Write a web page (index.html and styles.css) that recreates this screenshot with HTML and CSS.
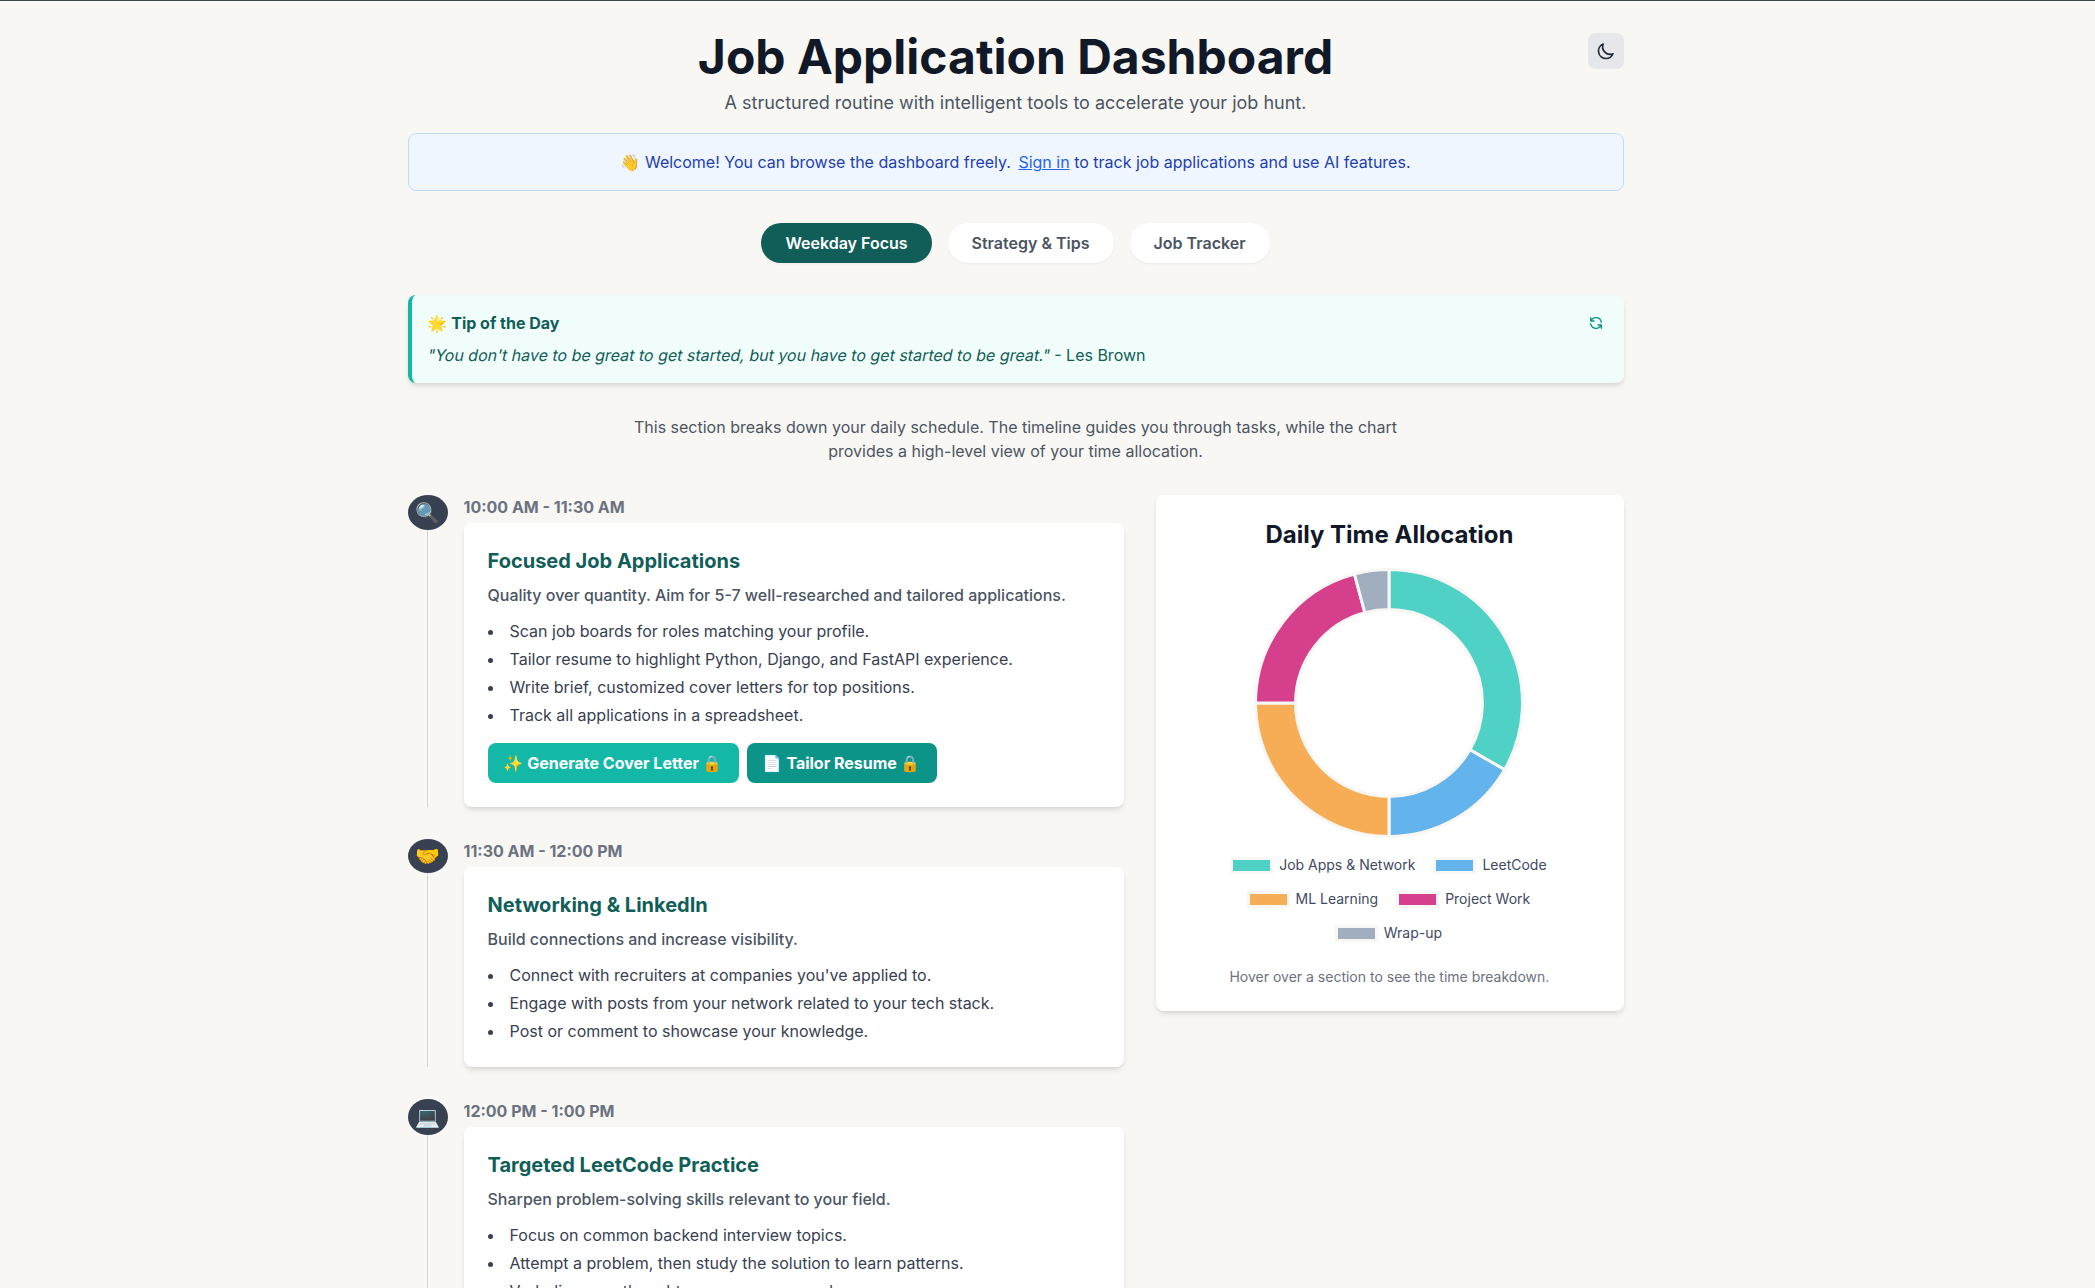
FILE: index.html
```html
<!doctype html>
<html lang="en">
<head>
    <meta charset="utf-8"/>
    <title>Job Application Dashboard</title>
    <link rel="stylesheet" href="styles.css">
</head>
<body>
    <div class="top-line"></div>
    <div class="page">
        <header class="header">
            <h1>Job Application Dashboard</h1>
            <button class="theme-btn" aria-label="Toggle theme">
                <svg viewBox="0 0 24 24" width="20" height="20" fill="none" stroke="#1f2937" stroke-width="2" stroke-linecap="round" stroke-linejoin="round"><path d="M20.354 15.354A9 9 0 018.646 3.646 9.003 9.003 0 0012 21a9.003 9.003 0 008.354-5.646z"/></svg>
            </button>
            <p class="subtitle">A structured routine with intelligent tools to accelerate your job hunt.</p>
        </header>

        <div class="banner">👋 Welcome! You can browse the dashboard freely. <a href="#">Sign in</a> to track job applications and use AI features.</div>

        <nav class="tabs">
            <a class="tab active" href="#">Weekday Focus</a>
            <a class="tab" href="#">Strategy &amp; Tips</a>
            <a class="tab" href="#">Job Tracker</a>
        </nav>

        <section class="tip">
            <div class="tip-head">
                <h3>🌟 Tip of the Day</h3>
                <button class="tip-refresh" aria-label="New tip">
                    <svg viewBox="0 0 24 24" width="16" height="16" fill="none" stroke="#0d9488" stroke-width="2" stroke-linecap="round" stroke-linejoin="round"><path d="M4 4v5h.582m15.356 2A8.001 8.001 0 004.582 9m0 0H9m11 11v-5h-.581m0 0a8.003 8.003 0 01-15.357-2m15.357 2H15"/></svg>
                </button>
            </div>
            <p class="tip-text"><span class="quote">"You don't have to be great to get started, but you have to get started to be great."</span> - Les Brown</p>
        </section>

        <p class="intro">This section breaks down your daily schedule. The timeline guides you through tasks, while the chart provides a high-level view of your time allocation.</p>

        <div class="grid">
            <div class="timeline">
                <div class="item">
                    <div class="marker">
                        <div class="circle">🔍</div>
                        <div class="line"></div>
                    </div>
                    <div class="body">
                        <p class="time">10:00 AM - 11:30 AM</p>
                        <div class="card">
                            <h4>Focused Job Applications</h4>
                            <p class="desc">Quality over quantity. Aim for 5-7 well-researched and tailored applications.</p>
                            <ul>
                                <li>Scan job boards for roles matching your profile.</li>
                                <li>Tailor resume to highlight Python, Django, and FastAPI experience.</li>
                                <li>Write brief, customized cover letters for top positions.</li>
                                <li>Track all applications in a spreadsheet.</li>
                            </ul>
                            <div class="actions">
                                <button class="btn btn-light">✨ Generate Cover Letter 🔒</button>
                                <button class="btn btn-dark">📄 Tailor Resume 🔒</button>
                            </div>
                        </div>
                    </div>
                </div>

                <div class="item">
                    <div class="marker">
                        <div class="circle short">🤝</div>
                        <div class="line"></div>
                    </div>
                    <div class="body">
                        <p class="time">11:30 AM - 12:00 PM</p>
                        <div class="card">
                            <h4>Networking &amp; LinkedIn</h4>
                            <p class="desc">Build connections and increase visibility.</p>
                            <ul>
                                <li>Connect with recruiters at companies you've applied to.</li>
                                <li>Engage with posts from your network related to your tech stack.</li>
                                <li>Post or comment to showcase your knowledge.</li>
                            </ul>
                        </div>
                    </div>
                </div>

                <div class="item">
                    <div class="marker">
                        <div class="circle tall">💻</div>
                        <div class="line"></div>
                    </div>
                    <div class="body">
                        <p class="time">12:00 PM - 1:00 PM</p>
                        <div class="card">
                            <h4>Targeted LeetCode Practice</h4>
                            <p class="desc">Sharpen problem-solving skills relevant to your field.</p>
                            <ul>
                                <li>Focus on common backend interview topics.</li>
                                <li>Attempt a problem, then study the solution to learn patterns.</li>
                                <li>Verbalize your thought process as you code.</li>
                            </ul>
                        </div>
                    </div>
                </div>
            </div>

            <aside class="chart-card">
                <h3>Daily Time Allocation</h3>
                <svg class="donut" viewBox="-135 -135 270 270" width="270" height="270">
                    <g stroke="#f8f7f4" stroke-width="3">
                        <path fill="#4fd1c5" d="M0 -133.5A133.5 133.5 0 0 1 115.6 66.75L80.9 46.7A93.45 93.45 0 0 0 0 -93.45Z"/>
                        <path fill="#63b3ed" d="M115.6 66.75A133.5 133.5 0 0 1 0 133.5L0 93.45A93.45 93.45 0 0 0 80.9 46.7Z"/>
                        <path fill="#f6ad55" d="M0 133.5A133.5 133.5 0 0 1 -133.5 0L-93.45 0A93.45 93.45 0 0 0 0 93.45Z"/>
                        <path fill="#d53f8c" d="M-133.5 0A133.5 133.5 0 0 1 -34.55 -128.95L-24.19 -90.27A93.45 93.45 0 0 0 -93.45 0Z"/>
                        <path fill="#a0aec0" d="M-34.55 -128.95A133.5 133.5 0 0 1 0 -133.5L0 -93.45A93.45 93.45 0 0 0 -24.19 -90.27Z"/>
                    </g>
                </svg>
                <div class="legend">
                    <div class="legend-row">
                        <span class="key"><i class="swatch teal"></i>Job Apps &amp; Network</span>
                        <span class="key"><i class="swatch blue"></i>LeetCode</span>
                    </div>
                    <div class="legend-row">
                        <span class="key"><i class="swatch orange"></i>ML Learning</span>
                        <span class="key"><i class="swatch pink"></i>Project Work</span>
                    </div>
                    <div class="legend-row">
                        <span class="key"><i class="swatch grey"></i>Wrap-up</span>
                    </div>
                </div>
                <p class="hint">Hover over a section to see the time breakdown.</p>
            </aside>
        </div>
    </div>
</body>
</html>
```

FILE: styles.css
```css
* {
    box-sizing: border-box;
}

html, body {
    height: 100%;
    overflow: hidden;
}

body {
    margin: 0;
    background: #f8f7f4;
    color: #374151;
    font-family: "Inter", "Noto Color Emoji", "Noto Sans", sans-serif;
    font-size: 16px;
    line-height: 24px;
}

h1, h3, h4, p, ul {
    margin: 0;
    padding: 0;
}

button {
    border: 0;
    font: inherit;
    cursor: pointer;
}

.top-line {
    height: 1px;
    background: #3d4a47;
}

.page {
    width: 1216px;
    margin-left: 407.5px;
    padding-top: 32px;
}

/* header */
.header {
    display: grid;
    grid-template-columns: 1fr auto 1fr;
    margin-bottom: 16px;
}

.header h1 {
    grid-column: 2;
    font-size: 48px;
    line-height: 48px;
    font-weight: 700;
    color: #111827;
}

.theme-btn {
    grid-column: 3;
    justify-self: end;
    align-self: start;
    display: flex;
    width: 36px;
    height: 36px;
    padding: 8px;
    border-radius: 8px;
    background: #e5e7eb;
}

.subtitle {
    grid-column: 1 / 4;
    margin-top: 8px;
    text-align: center;
    font-size: 18px;
    line-height: 28px;
    color: #4b5563;
}

/* sign in banner */
.banner {
    padding: 16px;
    border: 1px solid #bfdbfe;
    border-radius: 8px;
    background: #eff6ff;
    color: #1e40af;
    text-align: center;
}

.banner a {
    margin-left: 3px;
    color: #2563eb;
}

/* tabs */
.tabs {
    display: flex;
    justify-content: center;
    gap: 16px;
    margin: 32px 0;
}

.tab {
    padding: 8px 24px;
    border-radius: 9999px;
    background: #fff;
    color: #4b5563;
    font-weight: 600;
    text-decoration: none;
    box-shadow: 0 1px 2px rgba(0, 0, 0, 0.05);
}

.tab.active {
    background: #115e59;
    color: #fff;
}

/* tip */
.tip {
    padding: 16px;
    border-left: 4px solid #14b8a6;
    border-radius: 8px;
    background: #f0fdfa;
    box-shadow: 0 4px 6px -1px rgba(0, 0, 0, 0.1), 0 2px 4px -2px rgba(0, 0, 0, 0.1);
}

.tip-head {
    display: flex;
    justify-content: space-between;
    align-items: center;
    margin-bottom: 8px;
}

.tip-head h3 {
    font-size: 16px;
    font-weight: 700;
    color: #115e59;
}

.tip-refresh {
    display: flex;
    padding: 0 4px;
    background: none;
}

.tip-text {
    color: #115e59;
}

/* slanted upright Inter, the real italic face runs wider */
.quote {
    display: inline-block;
    transform: skewX(-12deg);
}

.intro {
    max-width: 768px;
    margin: 32px auto;
    text-align: center;
    color: #4b5563;
}

/* two columns */
.grid {
    display: grid;
    grid-template-columns: repeat(5, 1fr);
    gap: 32px;
    align-items: start;
}

.timeline {
    grid-column: span 3;
}

.chart-card {
    grid-column: span 2;
}

/* timeline */
.item {
    display: flex;
    gap: 16px;
    margin-bottom: 32px;
}

.marker {
    display: flex;
    flex-direction: column;
    align-items: center;
    flex: 0 0 40px;
}

.circle {
    display: flex;
    align-items: center;
    justify-content: center;
    width: 40px;
    height: 35px;
    border-radius: 50%;
    background: #374151;
    font-size: 20px;
}

.circle.short {
    height: 34px;
}

.circle.tall {
    height: 36px;
}

.line {
    flex: 1;
    width: 1px;
    background: #d1d5db;
}

.body {
    flex: 1;
    min-width: 0;
}

.time {
    margin-bottom: 4px;
    font-weight: 700;
    color: #6b7280;
}

.card {
    padding: 24px;
    border-radius: 8px;
    background: #fff;
    box-shadow: 0 4px 6px -1px rgba(0, 0, 0, 0.1), 0 2px 4px -2px rgba(0, 0, 0, 0.1);
}

.card h4 {
    margin-bottom: 8px;
    font-size: 20px;
    line-height: 28px;
    font-weight: 700;
    color: #115e59;
}

.desc {
    margin-bottom: 12px;
    font-weight: 500;
    color: #4b5563;
}

.card ul {
    list-style: disc inside;
}

.card li + li {
    margin-top: 4px;
}

.actions {
    display: flex;
    gap: 8px;
    margin-top: 16px;
}

.btn {
    height: 40px;
    padding: 0 16px;
    border-radius: 8px;
    color: #fff;
    font-weight: 700;
}

.btn-light {
    background: #14b8a6;
}

.btn-dark {
    background: #0d9488;
}

/* chart */
.chart-card {
    padding: 24px 25px 24px 24px;
    border-radius: 8px;
    background: #fff;
    text-align: center;
    box-shadow: 0 4px 6px -1px rgba(0, 0, 0, 0.1), 0 2px 4px -2px rgba(0, 0, 0, 0.1);
}

.chart-card h3 {
    margin-bottom: 17px;
    font-size: 24px;
    line-height: 32px;
    font-weight: 700;
    color: #111827;
}

.donut {
    display: block;
    margin: 0 auto;
}

.legend {
    margin-top: 18px;
    padding-right: 2px;
}

.legend-row {
    display: flex;
    justify-content: center;
    gap: 18px;
    height: 34px;
    font-size: 14px;
    color: #3f4a5f;
}

.key {
    display: flex;
    align-items: center;
    gap: 6px;
    height: 18px;
}

.swatch {
    width: 43px;
    height: 17px;
    border: 3px solid #f8f7f4;
}

.teal { background: #4fd1c5; }
.blue { background: #63b3ed; }
.orange { background: #f6ad55; }
.pink { background: #d53f8c; }
.grey { background: #a0aec0; }

.hint {
    margin-top: 9px;
    font-size: 14px;
    line-height: 20px;
    color: #6b7280;
}
```
